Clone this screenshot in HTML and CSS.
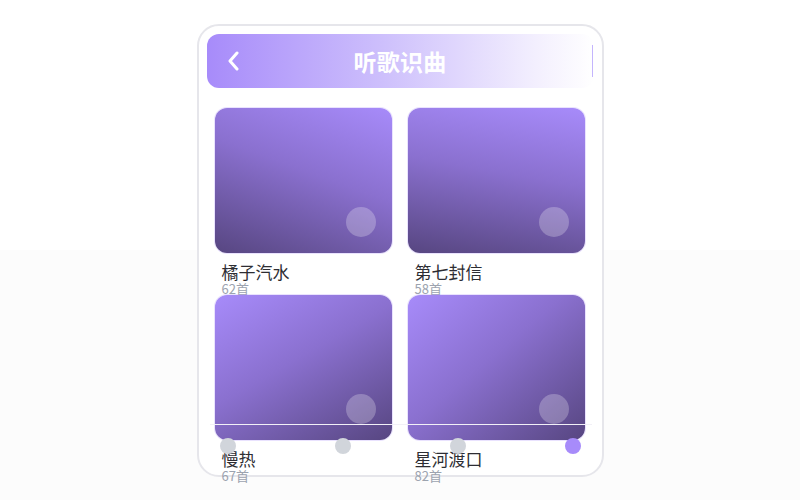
FILE: index.html
```html
<!DOCTYPE html>
<html lang="zh">

<head>
    <meta charset="UTF-8">
    <title>听歌识曲</title>
    <link rel="stylesheet" href="styles.css">
</head>

<body>
    <div class="stage">
        <div class="phone">
            <header class="top-bar">
                <span class="back">
                    <svg width="12" height="20" viewBox="0 0 12 20">
                        <polyline points="10,2 3,10 10,18" fill="none" stroke="#fff" stroke-width="3"
                            stroke-linecap="round" stroke-linejoin="round" />
                    </svg>
                </span>
                <h1>听歌识曲</h1>
                <span class="edge"></span>
            </header>

            <div class="list">
                <div class="item">
                    <div class="cover cover-a"><span class="play"></span></div>
                    <p class="name">橘子汽水</p>
                    <p class="count">62首</p>
                </div>
                <div class="item">
                    <div class="cover cover-b"><span class="play"></span></div>
                    <p class="name">第七封信</p>
                    <p class="count">58首</p>
                </div>
                <div class="item">
                    <div class="cover cover-c"><span class="play"></span></div>
                    <p class="name">慢热</p>
                    <p class="count">67首</p>
                </div>
                <div class="item">
                    <div class="cover cover-d"><span class="play"></span></div>
                    <p class="name">星河渡口</p>
                    <p class="count">82首</p>
                </div>
            </div>

            <!-- 下のタブ -->
            <nav class="tabs">
                <span class="dot"></span>
                <span class="dot"></span>
                <span class="dot"></span>
                <span class="dot active"></span>
            </nav>
        </div>
    </div>
</body>

</html>
```

FILE: styles.css
```css
body {
    margin: 0;
    background: linear-gradient(#ffffff 0, #ffffff 250px, #fcfcfc 250px);
    font-family: "Noto Sans CJK SC", "Noto Sans", sans-serif;
    height: 500px;
}

.stage {
    display: flex;
    justify-content: center;
    padding-top: 24px;
}

.phone {
    position: relative;
    width: 407px;
    height: 453px;
    box-sizing: border-box;
    border: 2px solid #e6e6eb;
    border-radius: 22px;
    padding: 8px;
    background: #fff;
}

.top-bar {
    display: grid;
    grid-template-columns: 1fr auto 1fr;
    align-items: center;
    height: 54px;
    border-radius: 12px;
    background: linear-gradient(90deg, #a78bfa 0%, #cdbffc 45%, #f3effe 85%, #ffffff 100%);
    padding: 0 1px;
}

.top-bar h1 {
    margin: 0;
    color: #fff;
    font-size: 23px;
    font-weight: bold;
    letter-spacing: 0.3px;
}

.back {
    display: flex;
    align-items: center;
    margin-left: 19px;
}

.edge {
    justify-self: end;
    width: 1px;
    height: 32px;
    background: #c4b5fd;
}

.list {
    display: grid;
    grid-template-columns: 177px 177px;
    grid-auto-rows: 187px;
    column-gap: 16px;
    padding: 20px 8px 0;
}

.item {
    min-width: 0;
}

.cover {
    position: relative;
    height: 145px;
    border-radius: 12px;
    box-shadow: 0 0 0 1px rgba(167, 139, 250, 0.25);
}

.cover-a {
    background: linear-gradient(200deg, #a78bfa 0%, #8a70cf 45%, #574681 100%);
}

.cover-b {
    background: linear-gradient(190deg, #a78bfa 0%, #8a70cf 45%, #574681 100%);
}

.cover-c {
    background: linear-gradient(150deg, #a78bfa 0%, #8a70cf 45%, #574681 100%);
}

.cover-d {
    background: linear-gradient(140deg, #a78bfa 0%, #8a70cf 45%, #574681 100%);
}

.play {
    position: absolute;
    right: 16px;
    bottom: 16px;
    width: 30px;
    height: 30px;
    border-radius: 50%;
    background: rgba(255, 255, 255, 0.25);
}

.name {
    margin: 9px 0 0 7px;
    font-size: 17px;
    line-height: 20px;
    color: #2d2d33;
}

.count {
    margin: 0 0 0 7px;
    font-size: 13px;
    line-height: 14px;
    color: #9ca3af;
}

.tabs {
    position: absolute;
    top: 398px;
    left: 11px;
    right: 10px;
    display: flex;
    justify-content: space-between;
    border-top: 1px solid #f2f0f7;
    padding: 13px 10px 0;
}

.dot {
    width: 16px;
    height: 16px;
    border-radius: 50%;
    background: #d1d5db;
}

.dot.active {
    background: #a78bfa;
}
```
